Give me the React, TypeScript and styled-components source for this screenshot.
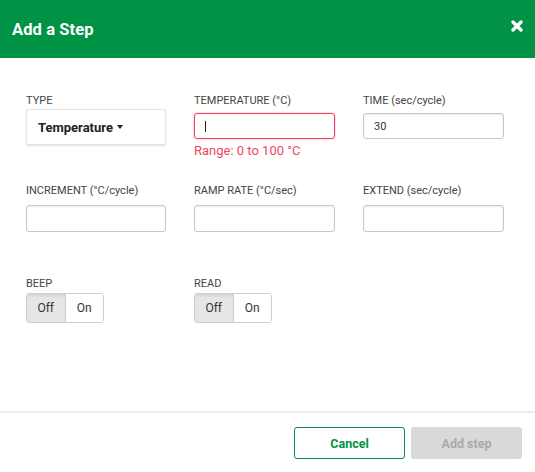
import React from 'react'
import styled, { createGlobalStyle } from 'styled-components'

const GlobalStyle = createGlobalStyle`
  html, body {
    margin: 0;
    padding: 0;
    background: #ffffff;
    font-family: Roboto, "Noto Sans", Arial, sans-serif;
  }
  * {
    box-sizing: border-box;
  }
`

type Field = {
  label: string
  value?: string
  error?: string
}

const firstRow: Field[] = [
  { label: 'TEMPERATURE (°C)', value: '', error: 'Range: 0 to 100 °C' },
  { label: 'TIME (sec/cycle)', value: '30' },
]

const secondRow: Field[] = [
  { label: 'INCREMENT (°C/cycle)' },
  { label: 'RAMP RATE (°C/sec)' },
  { label: 'EXTEND (sec/cycle)' },
]

const toggles = ['BEEP', 'READ']

const CloseIcon = () => (
  <svg width="12" height="12" viewBox="0 0 12 12">
    <path
      d="M2 2 L10 10 M10 2 L2 10"
      stroke="#ffffff"
      strokeWidth="3.4"
      strokeLinecap="round"
    />
  </svg>
)

const App = (): JSX.Element => {
  return (
    <Modal>
      <GlobalStyle />
      <Header>
        <Title>Add a Step</Title>
        <CloseButton aria-label="close">
          <CloseIcon />
        </CloseButton>
      </Header>

      <Body>
        <Row gap={28}>
          <Column width={140}>
            <Label>TYPE</Label>
            <Select>
              Temperature
              <Caret />
            </Select>
          </Column>
          {firstRow.map(field => (
            <Column key={field.label} width={141}>
              <Label>{field.label}</Label>
              <Input invalid={!!field.error} top={5}>
                {field.error ? <Cursor /> : field.value}
              </Input>
              {field.error ? <ErrorText>{field.error}</ErrorText> : null}
            </Column>
          ))}
        </Row>

        <Row gap={28} top={26}>
          {secondRow.map((field, i) => (
            <Column key={field.label} width={i === 0 ? 140 : 141}>
              <Label>{field.label}</Label>
              <Input top={7} tall />
            </Column>
          ))}
        </Row>

        <Row gap={90} top={45}>
          {toggles.map(name => (
            <Column key={name} width={78}>
              <Label>{name}</Label>
              <ToggleGroup>
                <ToggleButton active>Off</ToggleButton>
                <ToggleButton>On</ToggleButton>
              </ToggleGroup>
            </Column>
          ))}
        </Row>
      </Body>

      <Footer>
        <OutlineButton>Cancel</OutlineButton>
        <DisabledButton disabled>Add step</DisabledButton>
      </Footer>
    </Modal>
  )
}

const Modal = styled.div`
  width: 535px;
  height: 472px;
  display: flex;
  flex-direction: column;
  background: #ffffff;
`

const Header = styled.div`
  height: 58px;
  background: #009245;
  display: flex;
  align-items: center;
  justify-content: space-between;
  padding: 0 12px 0 12px;
`

const Title = styled.h1`
  margin: 0;
  color: #ffffff;
  font-size: 16.5px;
  font-weight: 700;
  letter-spacing: 0.1px;
`

const CloseButton = styled.button`
  border: none;
  background: none;
  padding: 0;
  display: flex;
  margin-top: -6px;
`

const Body = styled.div`
  flex: 1;
  padding: 36px 26px 0 26px;
  border-bottom: 2px solid #eeeeee;
`

const Row = styled.div<{ gap: number; top?: number }>`
  display: flex;
  gap: ${({ gap }) => gap}px;
  margin-top: ${({ top }) => top || 0}px;
`

const Column = styled.div<{ width: number }>`
  width: ${({ width }) => width}px;
  display: flex;
  flex-direction: column;
`

const Label = styled.div`
  font-size: 11px;
  color: #444444;
  line-height: 14px;
  height: 14px;
  white-space: nowrap;
`

const Select = styled.div`
  margin-top: 1px;
  height: 36px;
  border: 1px solid #e4e4e4;
  border-radius: 2px;
  box-shadow: 0 1px 2px rgba(0, 0, 0, 0.12);
  display: flex;
  align-items: center;
  padding-left: 11px;
  font-size: 13px;
  font-weight: 700;
  color: #222222;
`

const Caret = styled.span`
  margin-left: 4px;
  width: 0;
  height: 0;
  border-left: 3.5px solid transparent;
  border-right: 3.5px solid transparent;
  border-top: 4px solid #222222;
`

const Input = styled.div<{ invalid?: boolean; top: number; tall?: boolean }>`
  margin-top: ${({ top }) => top}px;
  height: ${({ tall }) => (tall ? 27 : 26)}px;
  border: 1px solid ${({ invalid }) => (invalid ? '#ee4059' : '#c8c8c8')};
  border-radius: 3px;
  box-shadow: ${({ invalid }) =>
    invalid
      ? '0 0 2px rgba(238, 64, 89, 0.5)'
      : 'inset 0 1px 2px rgba(0, 0, 0, 0.08)'};
  display: flex;
  align-items: center;
  padding-left: 10px;
  font-size: 11px;
  color: #333333;
`

const Cursor = styled.span`
  width: 1px;
  height: 11px;
  background: #222222;
`

const ErrorText = styled.div`
  margin-top: 4px;
  font-size: 13px;
  color: #f0475d;
  white-space: nowrap;
`

const ToggleGroup = styled.div`
  margin-top: 2px;
  display: flex;
  height: 30px;
  border: 1px solid #cfcfcf;
  border-radius: 3px;
  overflow: hidden;
`

const ToggleButton = styled.div<{ active?: boolean }>`
  flex: 1;
  display: flex;
  align-items: center;
  justify-content: center;
  font-size: 12px;
  color: #333333;
  background: ${({ active }) => (active ? '#e6e6e6' : '#ffffff')};
  box-shadow: ${({ active }) =>
    active ? 'inset 0 2px 3px rgba(0, 0, 0, 0.08)' : 'none'};
  & + & {
    border-left: 1px solid #cfcfcf;
  }
`

const Footer = styled.div`
  height: 59px;
  display: flex;
  justify-content: flex-end;
  align-items: flex-start;
  gap: 6px;
  padding: 14px 13px 0 0;
`

const BaseButton = styled.button`
  width: 111px;
  height: 32px;
  border-radius: 3px;
  font-family: inherit;
  font-size: 12.5px;
  font-weight: 700;
`

const OutlineButton = styled(BaseButton)`
  border: 1px solid #009245;
  background: #ffffff;
  color: #009245;
`

const DisabledButton = styled(BaseButton)`
  border: none;
  background: #d9d9d9;
  color: #a9a9a9;
`

export default App
